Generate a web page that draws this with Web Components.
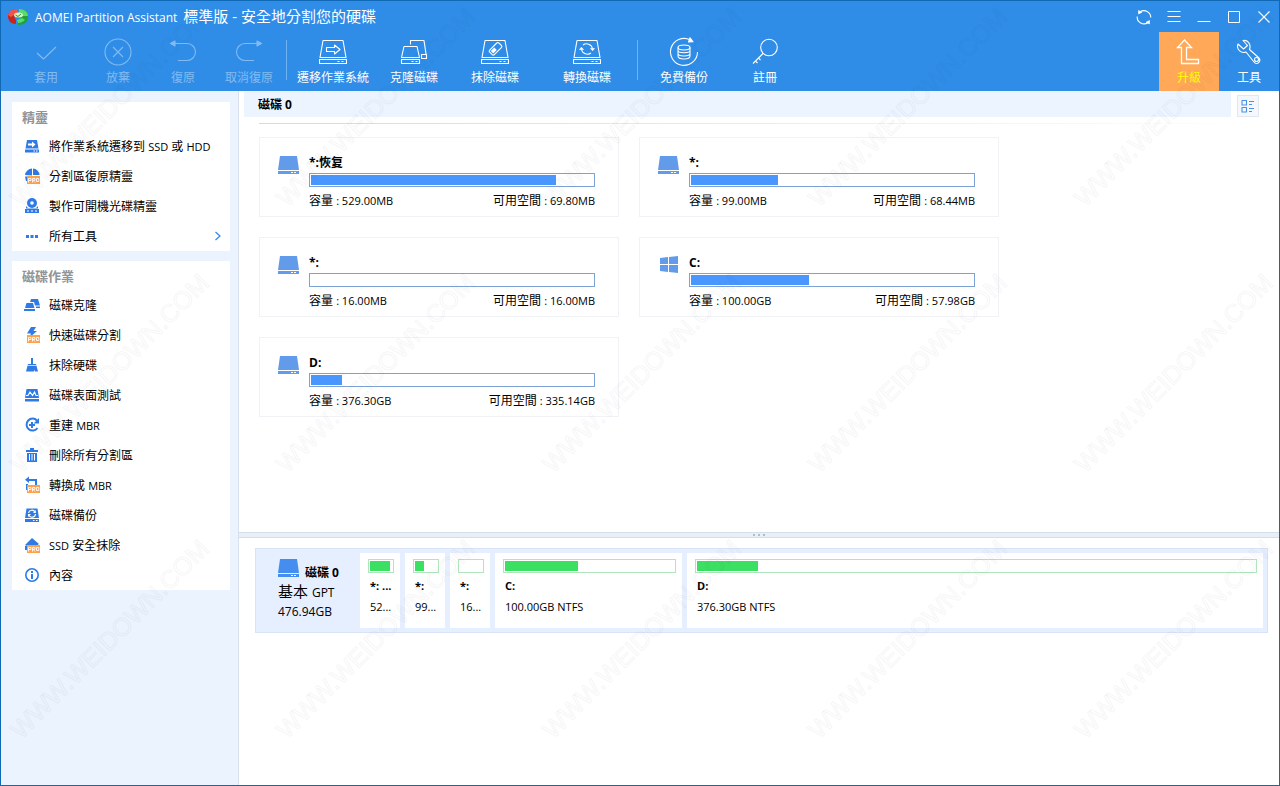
<!DOCTYPE html>
<html lang="zh-Hant">
<head>
<meta charset="utf-8">
<meta name="viewport" content="width=device-width, initial-scale=1">
<title>AOMEI Partition Assistant</title>
<style>
  html, body { margin: 0; height: 100%; }
  body { font: 12px/16px "Open Sans", "Noto Sans CJK TC", sans-serif; color: #000; }
</style>
</head>
<body>
<app-window>
  <title-bar slot="header"></title-bar>
  <tool-bar slot="header">
    <tool-button icon="check" label="套用" size="m" disabled></tool-button>
    <tool-button icon="discard" label="放棄" size="m" disabled></tool-button>
    <tool-button icon="undo" label="復原" size="xs" disabled></tool-button>
    <tool-button icon="redo" label="取消復原" size="l" disabled></tool-button>
    <tool-divider></tool-divider>
    <tool-button icon="migrate" label="遷移作業系統" size="xl"></tool-button>
    <tool-button icon="clone" label="克隆磁碟" size="s"></tool-button>
    <tool-button icon="wipe" label="抹除磁碟" size="xl"></tool-button>
    <tool-button icon="convert" label="轉換磁碟" size="xl"></tool-button>
    <tool-divider gap></tool-divider>
    <tool-button icon="backup" label="免費備份" size="xl"></tool-button>
    <tool-button icon="key" label="註冊" size="s"></tool-button>
    <tool-button slot="end" icon="upgrade" label="升級" accent></tool-button>
    <tool-button slot="end" icon="wrench" label="工具"></tool-button>
  </tool-bar>

  <side-panel slot="side" heading="精靈">
    <side-item icon="s-migrate">將作業系統遷移到 <la-tin>SSD</la-tin> 或 <la-tin>HDD</la-tin></side-item>
    <side-item icon="s-recover">分割區復原精靈</side-item>
    <side-item icon="s-bootcd">製作可開機光碟精靈</side-item>
    <side-item icon="s-dots" more>所有工具</side-item>
  </side-panel>
  <side-panel slot="side" heading="磁碟作業">
    <side-item icon="s-clone">磁碟克隆</side-item>
    <side-item icon="s-quick">快速磁碟分割</side-item>
    <side-item icon="s-brush">抹除硬碟</side-item>
    <side-item icon="s-surface">磁碟表面測試</side-item>
    <side-item icon="s-rebuild">重建 <la-tin>MBR</la-tin></side-item>
    <side-item icon="s-trash">刪除所有分割區</side-item>
    <side-item icon="s-tombr">轉換成 <la-tin>MBR</la-tin></side-item>
    <side-item icon="s-backup">磁碟備份</side-item>
    <side-item icon="s-erase"><la-tin>SSD</la-tin> 安全抹除</side-item>
    <side-item icon="s-info">內容</side-item>
  </side-panel>

  <volume-list heading="磁碟 0">
    <volume-card name="*:恢复" total="529.00MB" free="69.80MB" used="87"></volume-card>
    <volume-card name="*:" total="99.00MB" free="68.44MB" used="31"></volume-card>
    <volume-card name="*:" total="16.00MB" free="16.00MB" used="0"></volume-card>
    <volume-card name="C:" total="100.00GB" free="57.98GB" used="42" icon="windows"></volume-card>
    <volume-card name="D:" total="376.30GB" free="335.14GB" used="11"></volume-card>
  </volume-list>
  <pane-splitter></pane-splitter>
  <disk-row name="磁碟 0" kind="基本" table="GPT" total="476.94GB">
    <disk-part name="*: ..." info="52..." used="92"></disk-part>
    <disk-part name="*:" info="99..." used="42"></disk-part>
    <disk-part name="*:" info="16..." used="0"></disk-part>
    <disk-part name="C:" info="100.00GB NTFS" used="43" weight="173"></disk-part>
    <disk-part name="D:" info="376.30GB NTFS" used="11" weight="562"></disk-part>
  </disk-row>
</app-window>

<script>
const LATIN = '"Open Sans", "Noto Sans CJK TC", sans-serif';
const BLUE = '#2e7be6';

/* Hard-disk outline shared by the toolbar icons (28 x 28). */
const drive = '<path d="M4 2.500H24L27 19.500H1Z"/><path d="M.500 21.500H27.500V25.500H.500Z"/><path d="M18.500 23.500h2M22.500 23.500h2"/>';
const pro = '<rect x="4" y="9" width="13" height="8" fill="#ffa14a"/><g fill="none" stroke="#fff" stroke-width=".900"><path d="M5.500 15.500V11.500H8V13.500H6M9.500 15.500V11.500H12V13.300H10L12 15.500M13.500 11.500H15.800V14.500H13.500Z"/></g>';

const line = (w, h, body, sw = 1.1) => ({ w, h, body: `<g fill="none" stroke="currentColor" stroke-width="${sw}" stroke-linejoin="round">${body}</g>` });
const solid = (w, h, body) => ({ w, h, body: `<g fill="${BLUE}">${body}</g>` });

const ICONS = {
  check: line(28, 28, '<path d="M5 15L11.500 21L24 9"/>'),
  discard: line(28, 28, '<circle cx="14" cy="14" r="13"/><path d="M9 9L19 19M19 9L9 19"/>'),
  undo: line(28, 28, '<path d="M4 5.500H18A8.500 8.500 0 0 1 18 22.500H9"/><path d="M1.500 5.500L6 3V8Z" fill="currentColor"/>'),
  redo: line(28, 28, '<path d="M24 5.500H10A8.500 8.500 0 0 0 10 22.500H19"/><path d="M26.500 5.500L22 3V8Z" fill="currentColor"/>'),
  migrate: line(28, 28, drive + '<path d="M7.500 9.500H15.500V7L21 11.500L15.500 16V13.500H7.500Z"/>'),
  clone: line(28, 28, '<path d="M10.500 6.500V2.500H24L26 16M4 8.500H17L19.500 19.500H1.500Z"/><path d="M1.500 21.500H19.500V25.500H1.500ZM21.500 16.500H26.500V20.500H21.500Z"/><path d="M11.500 23.500h2M15.500 23.500h2"/>'),
  wipe: line(28, 28, drive + '<g transform="rotate(-45 14 11)"><rect x="8" y="8" width="13" height="6.500" rx="1.500"/><rect x="9.500" y="9.500" width="5" height="3.500" fill="currentColor" stroke="none"/></g>'),
  convert: line(28, 28, drive + '<path d="M10 7A6 6 0 0 1 19.500 10.500M18 15A6 6 0 0 1 8.500 11.500"/><path d="M17.500 10.500H21.500L19.600 12.800ZM6.500 11.500H10.500L8.400 9.200Z" fill="currentColor" stroke-width=".600"/>'),
  backup: line(30, 30, '<path d="M21 2.800A13.500 13.500 0 1 0 28.500 15"/><path d="M21 .800L24 4.800L19.500 5Z" fill="currentColor"/><ellipse cx="15" cy="10.500" rx="6" ry="2.500"/><path d="M9 10.500V19C9 23 21 23 21 19V10.500M9 13.500C9 16.500 21 16.500 21 13.500M9 16.500C9 19.800 21 19.800 21 16.500"/>'),
  key: line(28, 28, '<circle cx="18" cy="9.500" r="8.300"/><path d="M12 15.500L2 25.500M4.500 23L6.500 25M7.500 20L9.500 22"/>'),
  upgrade: line(28, 28, '<path d="M8.500 2L1.500 9.500H5.500V25.500H22.500V21.500H10.500V9.500H15.500Z" stroke-linejoin="miter" transform="translate(1 0)"/>', 1.3),
  wrench: line(28, 28, '<path d="M9 3.500L13.500 8.500L9.500 12L4 7C2 12 7 17 12 15L20 25C23 29 28 24 24.500 20.500L15.500 12.500C17.500 7 13.500 2.500 9 3.500Z" transform="translate(-1 -1)"/><circle cx="21.500" cy="21.500" r="2"/>'),
  refresh: line(16, 16, '<path d="M4 3A6.800 6.800 0 0 1 14.800 8.500M12 13.500A6.800 6.800 0 0 1 1.200 7.500"/><path d="M2.500 1.500V5L6 3.200ZM13.500 15V11.500L10 13.200Z" fill="currentColor" stroke-width=".600"/>'),
  menu: line(14, 14, '<path d="M.500 1.500H13.500M.500 6.500H13.500M.500 11.500H13.500"/>', 1),
  minimize: line(14, 14, '<path d="M.500 11.500H13.500"/>', 1),
  maximize: line(14, 14, '<path d="M1.500 1.500H12.500V12.500H1.500Z"/>', 1),
  close: line(14, 14, '<path d="M1.500 1.500L12.500 12.500M12.500 1.500L1.500 12.500"/>'),
  chevron: line(8, 10, '<path d="M1.500 1L6 5L1.500 9"/>', 1.3),
  logo: { w: 20, h: 16, body: '<path d="M0 7C0 3 4 0 9 0V5L6 8L8 11V15C3 15 0 12 0 7Z" fill="#c9241c"/><path d="M0 6C1 2 4 0 9 0V4L6 6L3 8Z" fill="#f4524a"/><path d="M11 0C17 0 20 3 20 8C20 13 16 16 10 16L9 11L13 9L15 6L11 4Z" fill="#1fa23a"/><path d="M11 0C16 0 20 3 20 7L14 7L11 4ZM9 11L14 9L17 11C15 13 12 14 10 14Z" fill="#58dc70"/><ellipse cx="10.500" cy="6" rx="4.500" ry="2.500" fill="#dff5b8"/><path d="M7.500 6L10 7.500L13 5" fill="none" stroke="#2b9a32"/>' },
  drive: { w: 21, h: 18, body: '<path d="M2 0H19L21 14H0ZM0 15H21V18H0Z" fill="currentColor"/><path d="M13 16.500H15M16 16.500H18" stroke="#fff"/>' },
  windows: { w: 21, h: 18, body: '<path d="M2 2L10 1V8H2ZM11 1L20 0V8H11ZM2 9H10V16L2 15ZM11 9H20V17L11 16Z" fill="currentColor"/>' },
  layout: line(14, 14, '<path d="M1 1.500H5.500V6H1ZM1 8.500H5.500V13H1ZM8 2.500H13M8 5.500H11M8 9.500H13M8 12.500H11"/>'),
  's-migrate': solid(18, 18, '<path d="M4 3H14L15.500 11.500H2.500ZM2 12.500H16V15.500H2Z"/><path d="M5 6.500H9V4.500L12.500 7.500L9 10.500V8.500H5Z" fill="#fff"/><path d="M10.500 14H12M13 14H14.500" stroke="#fff"/>'),
  's-recover': solid(18, 18, '<path d="M9 1.500A7.500 7.500 0 0 0 2 8L9 8.500ZM10 1.500A7 7 0 0 1 16.500 8H10ZM2 9.500H4V14H3Z"/>' + pro),
  's-bootcd': solid(18, 18, '<circle cx="9" cy="6" r="5"/><path d="M2 12H16V16H2Z"/><path d="M3 9L5 11H13L15 9V11.500H3Z"/><circle cx="9" cy="6" r="1.800" fill="#fff"/><path d="M4 14H6M8 14H10M12 14H14" stroke="#fff"/>'),
  's-dots': solid(18, 18, '<path d="M3 8H6V11H3ZM7.500 8H10.500V11H7.500ZM12 8H15V11H12Z"/>'),
  's-clone': solid(18, 18, '<path d="M8 3H15L17 9.500H12L11 6H7ZM3.500 7H10L11.500 12H2ZM1 13H12V15H1ZM13 10.500H17V12H13Z"/>'),
  's-quick': solid(18, 18, '<path d="M8 1H13L10.500 5H14L6 12L8 7.500H4Z"/>' + pro),
  's-brush': solid(18, 18, '<path d="M8 2H10V8H13L15 15.500H12L11 13.500V15.500H3L5 8H8Z"/><path d="M4.500 9.500H13.500" stroke="#fff" stroke-width=".700"/>'),
  's-surface': solid(18, 18, '<path d="M3.500 3H14.500L16 12H2ZM2 13H16V15.500H2Z"/><path d="M3 9.500H5L7 6L9.500 9.500L11.500 6L13 9.500H15" fill="none" stroke="#fff" stroke-width="1.200"/>'),
  's-rebuild': solid(18, 18, '<path d="M14 4.500A6 6 0 1 0 14.500 12" fill="none" stroke="#2e7be6" stroke-width="2"/><path d="M16 2V7.500H10.500ZM8 6H10V8H12V10H10V12H8V10H6V8H8Z"/>'),
  's-trash': solid(18, 18, '<path d="M7 2H11V4H15V6H3V4H7ZM4 7H14V16H4Z"/><path d="M6.500 8V14.500M9 8V14.500M11.500 8V14.500" stroke="#fff"/>'),
  's-tombr': solid(18, 18, '<path d="M6 .500V7L2 3.700ZM5 3H14V9H12V5H5ZM3 8H5V14H3Z"/>' + pro),
  's-backup': solid(18, 18, '<path d="M3.500 2.500H14.500L16 12H2ZM2 13H16V16H2Z"/><path d="M5.500 7A3.500 3.500 0 0 1 12 6M12.500 8A3.500 3.500 0 0 1 6 9.500" fill="none" stroke="#fff" stroke-width="1.200"/><path d="M12.800 4V7H10ZM5 11V8H8Z" fill="#fff"/><path d="M10 14.500H11.500M13 14.500H14.500" stroke="#fff"/>'),
  's-erase': solid(18, 18, '<path d="M9 2L16 8L13 10H4L2 9ZM2 10H4V14H2Z"/>' + pro),
  's-info': solid(18, 18, '<circle cx="9" cy="9" r="6.200" fill="none" stroke="#2e7be6" stroke-width="1.600"/><path d="M8 5H10V7H8ZM8 8H10V13H8Z"/>')
};

class Base extends HTMLElement {
  attr(name) { return this.getAttribute(name) || ''; }
  connectedCallback() {
    if (this.shadowRoot) return;
    const t = document.createElement('template');
    t.innerHTML = `<style>*{box-sizing:border-box}button{font:inherit;color:inherit;border:0;padding:0;margin:0;background:none}${this.css()}</style>${this.html()}`;
    this.attachShadow({ mode: 'open' }).append(t.content.cloneNode(true));
  }
}

customElements.define('ui-icon', class extends Base {
  css() { return ':host{display:block;flex:none}svg{display:block}'; }
  html() {
    const i = ICONS[this.attr('name')];
    return `<svg width="${i.w}" height="${i.h}" viewBox="0 0 ${i.w} ${i.h}" aria-hidden="true">${i.body}</svg>`;
  }
});

/* Latin runs are set one pixel smaller than the Chinese text around them. */
customElements.define('la-tin', class extends Base {
  css() { return `:host{font-size:11px;font-family:${LATIN}}`; }
  html() { return '<slot></slot>'; }
});

customElements.define('app-window', class extends Base {
  css() { return `
    :host{display:grid;grid-template-rows:auto 1fr;position:relative;box-sizing:border-box;min-height:100vh;border:1px solid #0f69b4;background:#fff;overflow:hidden}
    header{background:#2f8de8;color:#fff}
    .body{display:grid;grid-template-columns:238px minmax(0,1fr)}
    aside{display:flex;flex-direction:column;gap:10px;padding:11px 8px 11px 11px;background:#ebf3ff;border-right:1px solid #d9dfec}
    main{display:flex;flex-direction:column;min-width:0}
    .mark{position:absolute;inset:0;width:100%;height:100%;pointer-events:none}`; }
  html() { return `
    <header><slot name="header"></slot></header>
    <div class="body"><aside><slot name="side"></slot></aside><main><slot></slot></main></div>
    <svg class="mark" aria-hidden="true">
      <pattern id="wm" width="266" height="266" patternUnits="userSpaceOnUse">
        <text x="20" y="207" transform="rotate(-45 20 207)" font-family="Liberation Sans, sans-serif" font-size="25" fill="none" stroke="#000" stroke-opacity=".035">WWW.WEIDOWN.COM</text>
      </pattern>
      <rect width="100%" height="100%" fill="url(#wm)"/>
    </svg>`; }
});

customElements.define('title-bar', class extends Base {
  css() { return `
    :host{display:flex;align-items:center;height:31px;padding-left:7px}
    h1{display:flex;align-items:baseline;gap:6px;flex:1;margin:0 0 0 7px;font-weight:400;font-size:15px;line-height:18px;white-space:nowrap}
    h1 span{font-size:12px}
    button{display:grid;place-items:center;width:30px;height:30px}`; }
  html() {
    const b = [['refresh', '重新整理'], ['menu', '選單'], ['minimize', '最小化'], ['maximize', '最大化'], ['close', '關閉']];
    return `<ui-icon name="logo"></ui-icon><h1><span>AOMEI Partition Assistant</span> 標準版 - 安全地分割您的硬碟</h1>` +
      b.map(([n, l]) => `<button aria-label="${l}"><ui-icon name="${n}"></ui-icon></button>`).join('');
  }
});

customElements.define('tool-bar', class extends Base {
  css() { return ':host{display:flex;justify-content:space-between;height:59px}div{display:flex}.main{padding-left:9px}'; }
  html() { return '<div class="main"><slot></slot></div><div><slot name="end"></slot></div>'; }
});

customElements.define('tool-divider', class extends Base {
  css() { return ':host{display:block;width:1px;height:40px;margin-top:8px;background:#6fb2f2}:host([gap]){margin-left:4px}'; }
  html() { return ''; }
});

customElements.define('tool-button', class extends Base {
  css() { return `
    :host{display:block;width:60px}
    :host([size=xs]){width:58px}:host([size=s]){width:70px}:host([size=m]){width:72px}
    :host([size=l]){width:74px}:host([size=xl]){width:92px}
    button{display:flex;flex-direction:column;align-items:center;width:100%;height:59px;padding-top:5px;white-space:nowrap}
    .icon{display:grid;place-items:center;height:30px}
    .label{line-height:22px}
    button:disabled{color:#82bbf1}
    :host([accent]) button{background:#ffa858}
    :host([accent]) .label{color:#ff0}`; }
  html() { return `<button ${this.hasAttribute('disabled') ? 'disabled' : ''}><span class="icon"><ui-icon name="${this.attr('icon')}"></ui-icon></span><span class="label">${this.attr('label')}</span></button>`; }
});

customElements.define('side-panel', class extends Base {
  css() { return ':host{display:block;background:#fff}h2{margin:0;padding:1px 0 0 10px;font-size:13px;line-height:28px;font-weight:700;color:#909397}'; }
  html() { return `<h2>${this.attr('heading')}</h2><nav><slot></slot></nav>`; }
});

customElements.define('side-item', class extends Base {
  css() { return `
    :host{display:block}
    button{display:flex;align-items:center;width:100%;height:30px;padding:0 8px 0 11px;text-align:left;white-space:nowrap}
    .text{flex:1;padding:2px 0 0 8px}
    .more{color:#2f8de8}`; }
  html() { return `<button><ui-icon name="${this.attr('icon')}"></ui-icon><span class="text"><slot></slot></span>${this.hasAttribute('more') ? '<ui-icon class="more" name="chevron"></ui-icon>' : ''}</button>`; }
});

customElements.define('volume-list', class extends Base {
  css() { return `
    :host{display:block;min-height:441px}
    .head{display:flex;gap:6px;padding:0 20px 0 5px}
    h2{flex:1;margin:0;padding:1px 0 0 14px;background:#ecf4ff;font-size:12px;line-height:25px}
    .head button{display:grid;place-items:center;width:22px;height:22px;margin-top:4px;border:1px solid #e1e7f0;background:#f4f8fd;color:#4a90e8}
    hr{height:1px;margin:6px 20px 13px;border:0;background:linear-gradient(90deg,#d6d9e6,#fff)}
    .grid{display:grid;grid-template-columns:repeat(auto-fill,360px);gap:20px;padding:0 20px}`; }
  html() { return `<div class="head"><h2>${this.attr('heading')}</h2><button aria-label="檢視"><ui-icon name="layout"></ui-icon></button></div><hr><div class="grid"><slot></slot></div>`; }
});

customElements.define('usage-bar', class extends Base {
  css() { return `
    :host{display:block;height:14px;padding:1px;box-sizing:border-box;border:1px solid var(--edge)}
    div{height:100%;width:${this.attr('value')}%;background:var(--fill)}`; }
  html() { return '<div></div>'; }
});

customElements.define('volume-card', class extends Base {
  css() { return `
    :host{display:grid;grid-template-columns:21px 1fr;gap:10px;box-sizing:border-box;height:80px;padding:16px 23px 0 18px;border:1px solid #f1f2f5}
    ui-icon{margin-top:2px;color:#629bea}
    h3{margin:0 0 2px;font-size:12px;line-height:17px}
    usage-bar{--edge:#7da2d5;--fill:#4a96ff}
    p{display:flex;justify-content:space-between;margin:6px 0 0}`; }
  html() { return `<ui-icon name="${this.attr('icon') || 'drive'}"></ui-icon>
    <div><h3>${this.attr('name')}</h3><usage-bar value="${this.attr('used')}"></usage-bar>
    <p><span>容量 <la-tin>: ${this.attr('total')}</la-tin></span><span>可用空間 <la-tin>: ${this.attr('free')}</la-tin></span></p></div>`; }
});

customElements.define('pane-splitter', class extends Base {
  css() { return `
    :host{display:flex;justify-content:center;align-items:center;gap:3px;box-sizing:border-box;height:6px;border:solid #d5dfea;border-width:1px 0;background:#e9eff7}
    i{width:2px;height:2px;background:#aebdce}`; }
  html() { return '<i></i><i></i><i></i>'; }
});

customElements.define('disk-row', class extends Base {
  css() { return `
    :host{display:flex;gap:5px;box-sizing:border-box;height:85px;margin:10px 11px 10px 16px;padding:4px;border:1px solid #d8e4f5;background:#e6efff}
    .info{flex:none;width:95px;padding:6px 0 0 18px;white-space:nowrap}
    .top{display:flex;gap:6px;color:#468df0}
    h3{margin:6px 0 0;color:#000;font-size:12px;line-height:16px}
    p{margin:0;font-size:12px;line-height:18px}
    p.kind{font-size:15px;line-height:20px}
    p.kind span{font-size:12px}`; }
  html() { return `<div class="info"><div class="top"><ui-icon name="drive"></ui-icon><h3>${this.attr('name')}</h3></div>
    <p class="kind">${this.attr('kind')} <span>${this.attr('table')}</span></p><p>${this.attr('total')}</p></div><slot></slot>`; }
});

customElements.define('disk-part', class extends Base {
  css() {
    const w = this.attr('weight');
    return `
    :host{display:block;box-sizing:border-box;min-width:0;flex:${w ? w + ' 1 0px' : '0 0 40px'};padding:6px 6px 0 8px;background:#fff}
    usage-bar{--edge:#b0e5bd;--fill:#3bdf62}
    h4,p{margin:5px 0 0;padding-left:2px;white-space:nowrap;font-size:11px;line-height:16px}`; }
  html() { return `<usage-bar value="${this.attr('used')}"></usage-bar><h4>${this.attr('name')}</h4><p>${this.attr('info')}</p>`; }
});
</script>
</body>
</html>
